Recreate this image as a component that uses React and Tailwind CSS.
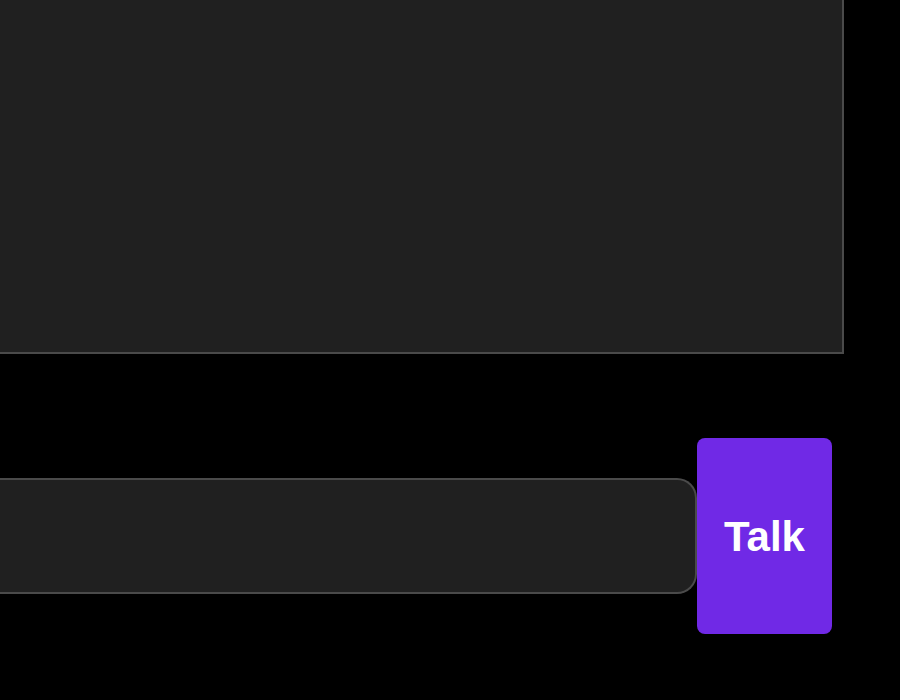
export default function App() {
  return (
    <div className="w-[900px] h-[700px] bg-black overflow-hidden" style={{ fontFamily: '"Liberation Sans", Arial, sans-serif' }}>
      <div className="w-[844px] h-[354px] bg-[#202020] border-r-2 border-b-2 border-[#4a4a4a]" />
      <div className="mt-[84px] flex items-center">
        <input
          className="w-[697px] h-[116px] bg-[#202020] border-2 border-l-0 border-[#4a4a4a] rounded-r-[20px] outline-none text-white px-4"
          type="text"
        />
        <button className="w-[135px] h-[196px] bg-[#7029e6] rounded-lg text-white text-[42px] font-bold flex items-center justify-center">
          Talk
        </button>
      </div>
    </div>
  );
}
